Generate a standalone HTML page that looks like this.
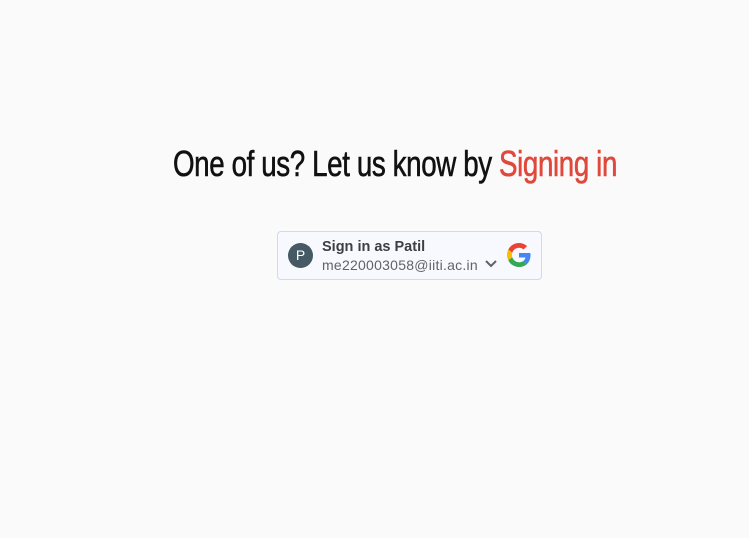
<!DOCTYPE html>
<html><head><style>
html,body{margin:0;padding:0;width:749px;height:538px;background:#fafafa;overflow:hidden}
.t{position:absolute;left:173px;top:143px;width:444px;white-space:nowrap;font-family:"Liberation Sans Narrow","Liberation Sans",sans-serif;font-size:36px;color:#111;transform-origin:left top;letter-spacing:-0.5px;-webkit-text-stroke:0.6px #111}
.t span{color:#e0483b;-webkit-text-stroke:0.6px #e0483b}
.btn{position:absolute;left:277px;top:231px;width:263px;height:47px;border:1px solid #c9dbf9;border-radius:4px;background:#f7f9fe;font-family:"Liberation Sans",sans-serif}
.av{position:absolute;left:10px;top:11px;width:25px;height:25px;border-radius:50%;background:#455a64;color:#fff;font-size:14px;text-align:center;line-height:25px}
.n{position:absolute;left:44px;top:7px;font-size:14.5px;font-weight:bold;color:#3c4043}
.e{position:absolute;left:44px;top:25px;font-size:14px;letter-spacing:0.25px;color:#5f6368}
</style></head><body>
<div class="t" id="t">One of us? Let us know by <span>Signing in</span></div>
<div class="btn">
<div class="av">P</div>
<div class="n">Sign in as Patil</div>
<div class="e">me220003058@iiti.ac.in</div>
<svg style="position:absolute;left:206px;top:27px" width="14" height="10" viewBox="0 0 14 10"><path d="M2 2l5 5 5-5" fill="none" stroke="#5f6368" stroke-width="2"/></svg>
<svg style="position:absolute;left:229px;top:11px" width="24" height="24" viewBox="0 0 48 48"><path fill="#EA4335" d="M24 9.5c3.540 0 6.71 1.22 9.21 3.6l6.85-6.85C35.9 2.38 30.47 0 24 0 14.62 0 6.51 5.38 2.56 13.22l7.980 6.19C12.43 13.72 17.74 9.5 24 9.5z"/><path fill="#4285F4" d="M46.98 24.55c0-1.57-.15-3.09-.38-4.55H24v9.02h12.94c-.58 2.96-2.26 5.48-4.78 7.18l7.73 6c4.51-4.18 7.09-10.36 7.09-17.65z"/><path fill="#FBBC05" d="M10.53 28.59c-.48-1.45-.76-2.99-.76-4.59s.27-3.14.76-4.59l-7.98-6.19C.92 16.46 0 20.12 0 24c0 3.88.92 7.54 2.56 10.78l7.97-6.19z"/><path fill="#34A853" d="M24 48c6.48 0 11.93-2.13 15.89-5.810l-7.73-6c-2.15 1.45-4.92 2.3-8.16 2.3-6.26 0-11.57-4.22-13.47-9.91l-7.98 6.19C6.51 42.62 14.62 48 24 48z"/></svg>
</div>
<script>
var t=document.getElementById('t');t.style.width='auto';var r=t.getBoundingClientRect().width;t.style.transform='scaleX('+(444/r)+')';
</script>
</body></html>
